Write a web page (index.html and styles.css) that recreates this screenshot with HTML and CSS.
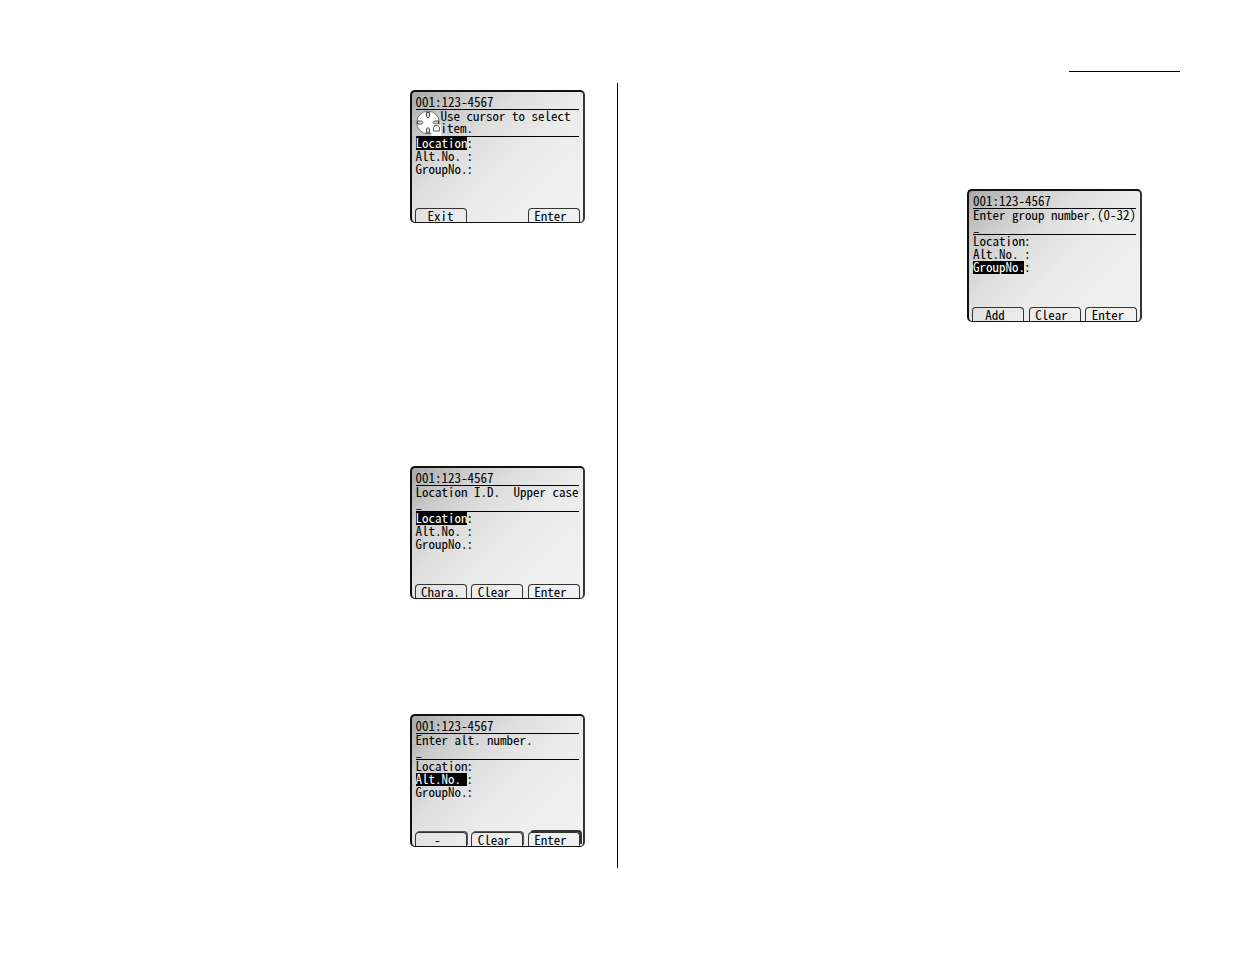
FILE: index.html
```html
<!DOCTYPE html>
<html lang="en">
<head>
    <meta charset="UTF-8">
    <meta name="viewport" content="width=device-width, initial-scale=1.0">
    <title>Phone Display Screens</title>
    <link rel="stylesheet" href="styles.css">
</head>
<body>
    <header class="page-header">
        <hr class="header-rule">
    </header>
    <main class="columns">
        <section class="column left">
            <!-- Select item -->
            <form class="screen select-item">
                <h2 class="title">001:123-4567</h2>
                <div class="prompt with-icon">
                    <svg class="cursor-icon" viewBox="0 0 25 26" aria-hidden="true">
                        <circle cx="12" cy="12.500" r="11.300" fill="#fff" stroke="#777" stroke-width="1"/>
                        <g fill="#ddd" stroke="#333" stroke-width="0.900">
                            <path d="M10.500 2.500v4q1.500 3 3 0v-4z"/>
                            <path d="M10.500 23v-4q1.500-3 3 0v4z"/>
                            <path d="M1.500 11h4q3 1.500 0 3h-4z"/>
                            <path d="M22.500 11h-4q-3 1.500 0 3h4z"/>
                        </g>
                        <path d="M15.500 26V18l2-3.500H25V26z" fill="#fff"/>
                        <path d="M18.500 15.500h3l2 1.500v4h-6v-3z" fill="#fff" stroke="#555" stroke-width="0.900"/>
                    </svg>
                    <p>Use cursor to select item.</p>
                </div>
                <ul class="items">
                    <li><span class="name selected">Location</span>:</li>
                    <li><span class="name">Alt.No.</span>:</li>
                    <li><span class="name">GroupNo.</span>:</li>
                </ul>
                <div class="softkeys">
                    <button type="button">Exit</button>
                    <button type="button" class="short">Enter</button>
                </div>
            </form>

            <!-- Location -->
            <form class="screen location">
                <h2 class="title">001:123-4567</h2>
                <div class="prompt">
                    <div class="prompt-text"><label for="location">Location I.D.</label><span>Upper case</span></div>
                    <input type="text" id="location" value="_">
                </div>
                <ul class="items">
                    <li><span class="name selected">Location</span>:</li>
                    <li><span class="name">Alt.No.</span>:</li>
                    <li><span class="name">GroupNo.</span>:</li>
                </ul>
                <div class="softkeys">
                    <button type="button">Chara.</button>
                    <button type="button" class="short">Clear</button>
                    <button type="button" class="short">Enter</button>
                </div>
            </form>

            <!-- Alternate number -->
            <form class="screen alt-number">
                <h2 class="title">001:123-4567</h2>
                <div class="prompt">
                    <div class="prompt-text"><label for="alt">Enter alt. number.</label></div>
                    <input type="text" id="alt" value="_">
                </div>
                <ul class="items">
                    <li><span class="name">Location</span>:</li>
                    <li><span class="name selected">Alt.No.</span>:</li>
                    <li><span class="name">GroupNo.</span>:</li>
                </ul>
                <div class="softkeys">
                    <button type="button" class="short raised">-</button>
                    <button type="button" class="short raised">Clear</button>
                    <button type="button" class="short raised strong">Enter</button>
                </div>
            </form>
        </section>

        <section class="column right">
            <!-- Group number -->
            <form class="screen">
                <h2 class="title">001:123-4567</h2>
                <div class="prompt">
                    <div class="prompt-text"><label for="group">Enter group number.</label><span>(0-32)</span></div>
                    <input type="text" id="group" value="_">
                </div>
                <ul class="items">
                    <li><span class="name">Location</span>:</li>
                    <li><span class="name">Alt.No.</span>:</li>
                    <li><span class="name selected">GroupNo.</span>:</li>
                </ul>
                <div class="softkeys">
                    <button type="button" class="short">Add</button>
                    <button type="button" class="short">Clear</button>
                    <button type="button" class="short">Enter</button>
                </div>
            </form>
        </section>
    </main>
</body>
</html>
```
FILE: styles.css
```css
* {
    box-sizing: border-box;
}
body {
    margin: 0;
    background-color: #fff;
    color: #000;
    font-family: "Noto Sans CJK JP", "Liberation Mono", monospace;
    font-feature-settings: "hwid" 1;
    font-size: 13px;
    line-height: 11px;
}
.page-header {
    display: flex;
    justify-content: flex-end;
    padding: 71px 55px 11px;
}
.header-rule {
    width: 111px;
    margin: 0;
    border: 0;
    border-top: 1px solid #000;
}
.columns {
    display: grid;
    grid-template-columns: 1fr 1fr;
    padding-bottom: 86px;
}
.column {
    display: flex;
    flex-direction: column;
    align-items: flex-end;
}
.left {
    padding: 7px 32px 21px 0;
    border-right: 1px solid #000;
}
.right {
    padding: 106px 93px 0 0;
}
.screen {
    display: flex;
    flex-direction: column;
    width: 175px;
    height: 133px;
    padding: 0 4px;
    border: 2px solid #111;
    border-right-color: #333;
    border-bottom-width: 1px;
    border-radius: 5px;
    background: linear-gradient(135deg, #a8a8a8 0%, #cacaca 18%, #dedede 36%, #ebebeb 58%, #f2f2f2 100%);
}
.select-item {
    margin-bottom: 243px;
}
.location {
    margin-bottom: 115px;
}
.title {
    height: 18px;
    margin: 0;
    padding-top: 4px;
    border-bottom: 1px solid #000;
    font-size: 13px;
    font-weight: 400;
}
.prompt {
    height: 26px;
    border-bottom: 1px solid #000;
}
.prompt p {
    margin: 0 -6px 0 0;
    line-height: 12px;
}
.with-icon {
    display: flex;
    height: 27px;
}
.cursor-icon {
    flex: none;
    width: 25px;
    height: 26px;
}
.prompt-text {
    display: flex;
    justify-content: space-between;
    height: 13px;
    white-space: nowrap;
}
.prompt input {
    display: block;
    width: 100%;
    height: 20px;
    margin-top: -6px;
    padding: 0;
    border: 0;
    outline: 0;
    background: none;
    color: inherit;
    font: inherit;
    font-feature-settings: inherit;
    line-height: 20px;
}
.items {
    margin: 0;
    padding: 0;
    list-style: none;
}
.items li {
    display: flex;
    height: 13px;
}
.name {
    width: 51px;
}
.selected {
    background-color: #000;
    color: #fff;
}
.softkeys {
    display: flex;
    justify-content: space-between;
    margin: auto -1px 0;
}
.softkeys button {
    width: 52px;
    height: 14px;
    padding: 0;
    border: 1px solid #333;
    border-bottom: 0;
    border-radius: 4px 4px 0 0;
    background: none;
    color: inherit;
    font: inherit;
    font-feature-settings: inherit;
    line-height: 12px;
    white-space: nowrap;
}
.softkeys .short {
    padding-right: 6px;
}
.softkeys .raised {
    box-shadow: 1px -1px 0 #555;
}
.softkeys .strong {
    box-shadow: 2px -2px 0 #333;
}
```
